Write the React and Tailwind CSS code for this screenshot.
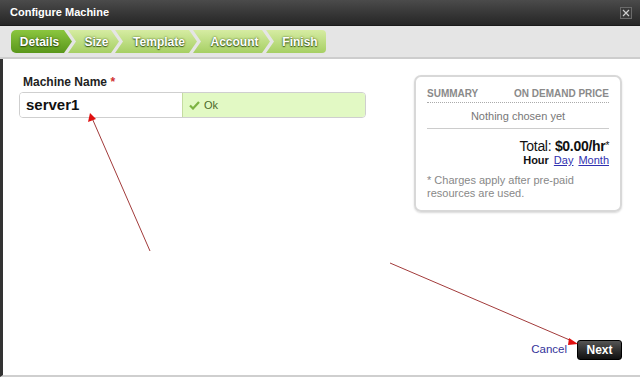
import React from 'react';

const steps = [
  { label: 'Details', width: 'w-[61px]', active: true, first: true },
  { label: 'Size', width: 'w-[51px]' },
  { label: 'Template', width: 'w-[82px]' },
  { label: 'Account', width: 'w-[77px]' },
  { label: 'Finish', width: 'w-[60px]', last: true },
];

const Step = ({ step }) => {
  const shape = step.first
    ? '[clip-path:polygon(0_0,calc(100%-8px)_0,100%_50%,calc(100%-8px)_100%,0_100%)] rounded-l-[5px] pr-[4px]'
    : step.last
    ? '[clip-path:polygon(0_0,100%_0,100%_100%,0_100%,8px_50%)] rounded-r-[4px] -ml-[4px] pl-[8px]'
    : '[clip-path:polygon(0_0,calc(100%-8px)_0,100%_50%,calc(100%-8px)_100%,0_100%,8px_50%)] -ml-[4px] pl-[6px]';
  const colour = step.active
    ? 'bg-gradient-to-b from-[#8bc63e] to-[#5a971b]'
    : 'bg-gradient-to-b from-[#d6ecA2] to-[#a6cf63]';
  return (
    <div
      className={`${shape} ${colour} ${step.width} h-[23px] flex items-center justify-center text-white text-[12px] font-bold [text-shadow:0_0_2px_rgba(40,70,10,0.9),0_1px_1px_rgba(40,70,10,0.8)]`}
    >
      {step.label}
    </div>
  );
};

const App = () => {
  return (
    <div className="w-[640px] h-[377px] bg-white flex flex-col relative overflow-hidden font-['Liberation_Sans',Arial,sans-serif]">
      {/* title bar */}
      <div className="h-[26px] shrink-0 bg-gradient-to-b from-[#4b4b4b] to-[#262626] border-b border-[#1a1a1a] flex items-center pl-[10px] pr-[8px]">
        <span className="text-white text-[11px] font-bold">Configure Machine</span>
        <div className="ml-auto w-[12px] h-[12px] bg-[#3a3a3a] border border-[#6a6a6a] flex items-center justify-center">
          <svg width="8" height="8" viewBox="0 0 8 8">
            <path d="M1 1 L7 7 M7 1 L1 7" stroke="#cfcfcf" strokeWidth="1.2" />
          </svg>
        </div>
      </div>

      {/* wizard steps */}
      <div className="h-[33px] shrink-0 bg-[#e5e5e5] border-b-2 border-[#cdcdcd] flex items-center pl-[11px]">
        {steps.map((s) => (
          <Step key={s.label} step={s} />
        ))}
      </div>

      {/* body */}
      <div className="flex-1 flex flex-col border-l-[3px] border-[#333] border-b-2 border-b-[#cfcfcf]">
        <div className="flex items-start pt-[16px] pl-[16px] pr-[18px]">
          <div className="flex flex-col">
            <div className="text-[12px] font-bold text-[#222] pl-[4px] leading-[14px]">
              Machine Name <span className="text-[#d03030]">*</span>
            </div>
            <div className="mt-[3px] w-[347px] h-[26px] flex border border-[#cfcfcf] rounded-[4px] overflow-hidden">
              <div className="w-[162px] bg-white flex items-center pl-[6px] text-[15px] font-bold text-[#111]">
                server1
              </div>
              <div className="flex-1 bg-[#e2f9c4] border-l border-[#c4dca0] flex items-center pl-[6px] gap-[4px] text-[11px] text-[#4c6a2a]">
                <svg width="11" height="9" viewBox="0 0 11 9">
                  <path d="M1 4.5 L4 7.5 L10 1" stroke="#7cb342" strokeWidth="2.2" fill="none" />
                </svg>
                Ok
              </div>
            </div>
          </div>

          <div className="ml-auto w-[208px] h-[137px] border-2 border-[#d8d8d8] rounded-[7px] shadow-[0_1px_2px_rgba(0,0,0,0.15)] px-[11px] pt-[11px] flex flex-col">
            <div className="flex justify-between text-[10px] font-bold text-[#8a8a8a] leading-[12px] pb-[2px] border-b border-dotted border-[#aaa]">
              <span>SUMMARY</span>
              <span>ON DEMAND PRICE</span>
            </div>
            <div className="text-center text-[11px] text-[#777] leading-[13px] pt-[7px] pb-[5px] border-b border-[#ccc]">
              Nothing chosen yet
            </div>
            <div className="text-right text-[14px] text-[#111] mt-[9px] leading-[16px] tracking-[-0.3px]">
              Total: <span className="font-bold">$0.00/hr</span>
              <span className="text-[10px] align-top">*</span>
            </div>
            <div className="text-right text-[11px] leading-[13px] flex justify-end gap-[5px]">
              <span className="font-bold text-[#111]">Hour</span>
              <span className="text-[#3030b0] underline">Day</span>
              <span className="text-[#3030b0] underline">Month</span>
            </div>
            <div className="text-[11px] text-[#888] mt-[7px] leading-[13px]">
              * Charges apply after pre-paid resources are used.
            </div>
          </div>
        </div>

        <div className="mt-auto flex items-center justify-end gap-[10px] pr-[18px] pb-[15px]">
          <span className="text-[11.5px] text-[#33339a]">Cancel</span>
          <div className="w-[45px] h-[20px] rounded-[3px] bg-gradient-to-b from-[#555] to-[#111] border border-[#000] text-white text-[12px] font-bold flex items-center justify-center">
            Next
          </div>
        </div>
      </div>

      {/* annotation arrows */}
      <svg className="absolute inset-0 pointer-events-none" width="640" height="377">
        <line x1="150" y1="251" x2="92" y2="118" stroke="#a23b3b" strokeWidth="1" />
        <polygon points="90,113 88,122 96,119" fill="#e01010" />
        <line x1="390" y1="263" x2="572" y2="341" stroke="#a23b3b" strokeWidth="1" />
        <polygon points="578,344 569,338 568,345" fill="#e01010" />
      </svg>
    </div>
  );
};

export default App;
